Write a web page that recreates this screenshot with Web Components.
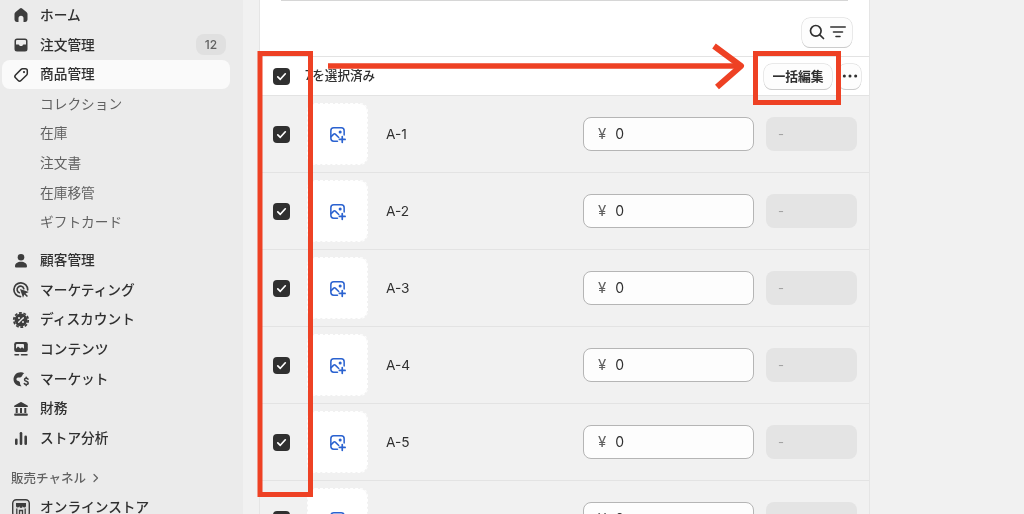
<!DOCTYPE html>
<html lang="ja">
<head>
<meta charset="utf-8">
<title>商品管理</title>
<style>
    html, body { margin: 0; height: 514px; overflow: hidden; background: #f1f1f1; }
    body {
        font-family: "Inter", "Noto Sans CJK JP", sans-serif;
        font-size: 13.7px;
        color: #303030;
        filter: blur(.35px); /* the reference is a soft, scaled-up capture */
    }
</style>
</head>
<body>
<app-shell>
    <side-nav slot="nav">
        <nav-item icon="home">ホーム</nav-item>
        <nav-item icon="inbox" badge="12">注文管理</nav-item>
        <nav-item icon="tag" active>商品管理</nav-item>
        <nav-item sub>コレクション</nav-item>
        <nav-item sub>在庫</nav-item>
        <nav-item sub>注文書</nav-item>
        <nav-item sub>在庫移管</nav-item>
        <nav-item sub>ギフトカード</nav-item>
        <nav-item icon="person" class="group">顧客管理</nav-item>
        <nav-item icon="target">マーケティング</nav-item>
        <nav-item icon="discount">ディスカウント</nav-item>
        <nav-item icon="content">コンテンツ</nav-item>
        <nav-item icon="globe">マーケット</nav-item>
        <nav-item icon="bank">財務</nav-item>
        <nav-item icon="bars">ストア分析</nav-item>
        <nav-heading>販売チャネル</nav-heading>
        <nav-item icon="store">オンラインストア</nav-item>
    </side-nav>
    <variant-card>
        <variant-row>A-1</variant-row>
        <variant-row>A-2</variant-row>
        <variant-row>A-3</variant-row>
        <variant-row>A-4</variant-row>
        <variant-row>A-5</variant-row>
        <variant-row>A-6</variant-row>
    </variant-card>
</app-shell>
<red-notes></red-notes>

<script>
const ICONS = {
    home: `<path fill="currentColor" d="M8.900 3.500a1.800 1.800 0 0 1 2.200 0l4.300 3.400c.7.500 1.100 1.300 1.100 2.200v5.500a2.300 2.300 0 0 1-2.300 2.400h-1.700v-3.700a2.500 2.500 0 0 0-5 0V17H5.800a2.300 2.300 0 0 1-2.300-2.400V9.100c0-.9.400-1.700 1.100-2.200z"/>`,
    inbox: `<path fill="currentColor" fill-rule="evenodd" d="M6 3.500h8A2.500 2.500 0 0 1 16.500 6v8a2.500 2.500 0 0 1-2.500 2.500H6A2.500 2.500 0 0 1 3.500 14V6A2.500 2.500 0 0 1 6 3.500zM6 5a1 1 0 0 0-1 1v3.500h2.400c.5 0 .8.300 1 .7l.3.8h2.600l.3-.8c.2-.4.500-.7 1-.7H15V6a1 1 0 0 0-1-1z"/>`,
    tag: `<path fill="none" stroke="currentColor" stroke-width="1.500" stroke-linejoin="round" d="M11.500 3.800h2.800a2 2 0 0 1 2 2v2.800a2 2 0 0 1-.6 1.400l-5.700 5.500a2 2 0 0 1-2.800 0l-2.700-2.700a2 2 0 0 1 0-2.800l5.600-5.600a2 2 0 0 1 1.400-.6z"/><circle cx="13" cy="7.100" r="1.100" fill="currentColor"/>`,
    person: `<circle cx="10" cy="6.300" r="3.300" fill="currentColor"/><path fill="currentColor" d="M4 15.200c0-2.800 2.700-4.400 6-4.400s6 1.600 6 4.400c0 .7-.5 1.300-1.200 1.300H5.200c-.7 0-1.200-.6-1.200-1.300z"/>`,
    target: `<path fill="none" stroke="currentColor" stroke-width="1.700" stroke-linecap="round" d="M9.500 16.600A6.900 6.900 0 1 1 16.700 9.800"/><path fill="none" stroke="currentColor" stroke-width="1.600" stroke-linecap="round" d="M8.400 12.800a3.400 3.400 0 1 1 4.400-4"/><path fill="currentColor" d="M9 9l8.800 3.100-3.300 1.400 2.500 2.500-1.100 1.100-2.500-2.500L12 17.800z"/>`,
    discount: `<circle cx="10" cy="10" r="6.400" fill="currentColor"/><circle cx="10" cy="10" r="7.200" fill="none" stroke="currentColor" stroke-width="1.800" stroke-dasharray="2.800 1.725"/><path stroke="#ebebeb" stroke-width="1.400" stroke-linecap="round" d="M12.300 7.700l-4.600 4.600"/><circle cx="8" cy="8" r="1" fill="#ebebeb"/><circle cx="12" cy="12" r="1" fill="#ebebeb"/>`,
    content: `<rect x="3.200" y="3" width="13.600" height="10" rx="2.200" fill="currentColor"/><path fill="#ebebeb" d="M5 9.800l2-2.200 2.400 2 1.600-1.300 2 1.500v-3.800a1 1 0 0 0-1-1H6a1 1 0 0 0-1 1z"/><path stroke="currentColor" stroke-width="1.500" stroke-linecap="round" d="M4 15.800h3.500M10.500 15.800H16"/>`,
    globe: `<path fill="currentColor" d="M13.200 4.300A7 7 0 1 0 10.500 17.200c-1-.9-1.500-2-1.500-3.200 0-1.500-1.300-1.700-2.500-2.200C5.400 11.300 5 9.800 6 9c1.200-.9 2.700-.3 3.800-.8 1-.5 1.300-1.500 1.700-2.300.3-.6 1-1.100 1.700-1.600z"/><path fill="none" stroke="currentColor" stroke-width="1.500" stroke-linecap="round" d="M17 10.200c-.4-.6-1-.9-1.800-.9-1 0-1.700.6-1.700 1.400 0 2 3.700 1.200 3.700 3.300 0 .9-.8 1.500-1.900 1.500-.9 0-1.600-.4-2-1M15.200 8.200v1M15.200 15.500v1"/>`,
    bank: `<path fill="currentColor" d="M9.300 3.200a1.500 1.500 0 0 1 1.400 0l5.800 3.200c.7.400.4 1.600-.4 1.600H3.900c-.8 0-1.100-1.200-.4-1.600z"/><rect x="4.700" y="9" width="2" height="5" fill="currentColor"/><rect x="9" y="9" width="2" height="5" fill="currentColor"/><rect x="13.300" y="9" width="2" height="5" fill="currentColor"/><rect x="3.200" y="14.500" width="13.600" height="2.300" rx=".8" fill="currentColor"/>`,
    bars: `<rect x="4" y="10.500" width="2.600" height="6.500" rx="1.300" fill="currentColor"/><rect x="8.700" y="4" width="2.600" height="13" rx="1.300" fill="currentColor"/><rect x="13.400" y="7.500" width="2.600" height="9.500" rx="1.300" fill="currentColor"/>`,
    store: `<rect x="1.700" y="1.700" width="16.600" height="16.600" rx="3.600" fill="#e0e0e0" stroke="currentColor" stroke-width="1.400"/><path fill="currentColor" d="M5 5h10v3.300a1.700 1.700 0 0 1-3.300 0 1.700 1.700 0 0 1-3.400 0 1.700 1.700 0 0 1-3.300 0z"/><path fill="none" stroke="currentColor" stroke-width="1.300" d="M5.800 10.500V16M14.200 10.500V16M8.500 16v-3.500h3V16"/>`,
    search: `<circle cx="8.800" cy="8.800" r="5.300" fill="none" stroke="currentColor" stroke-width="1.700"/><path stroke="currentColor" stroke-width="1.700" stroke-linecap="round" d="M12.800 12.800l3.700 3.700"/>`,
    filter: `<path stroke="currentColor" stroke-width="1.600" stroke-linecap="round" d="M2.800 5h14.400M5.500 10h9M8 14.500h4"/>`,
    dots: `<circle cx="3.700" cy="10" r="1.700" fill="currentColor"/><circle cx="10" cy="10" r="1.700" fill="currentColor"/><circle cx="16.300" cy="10" r="1.700" fill="currentColor"/>`,
    imageadd: `<path fill="none" stroke="currentColor" stroke-width="1.600" stroke-linecap="round" stroke-linejoin="round" d="M10 17H6a3 3 0 0 1-3-3V6a3 3 0 0 1 3-3h8a3 3 0 0 1 3 3v4.500"/><path fill="none" stroke="currentColor" stroke-width="1.600" stroke-linecap="round" stroke-linejoin="round" d="M3.300 12.200l2.700-2.600c.5-.5 1.200-.5 1.700 0l3.600 3.500"/><circle cx="12.800" cy="7.300" r="1.600" fill="currentColor"/><path stroke="currentColor" stroke-width="1.800" stroke-linecap="round" d="M15 12.200v6M12 15.200h6"/>`
};

const svgIcon = (name, size = 20) =>
    `<svg width="${size}" height="${size}" viewBox="0 0 20 20" aria-hidden="true">${ICONS[name] || ''}</svg>`;

class AppShell extends HTMLElement {
    constructor(){
        super();
        this.attachShadow({mode:'open'})
        this.shadowRoot.innerHTML = `
        <style>
            :host { display: grid; grid-template-columns: 243px 627px; height: 514px; overflow: hidden; }
            #main { padding-left: 16px; min-width: 0; }
        </style>
        <slot name="nav"></slot>
        <div id="main"><slot></slot></div>
        `;
    }
}

class SideNav extends HTMLElement {
    constructor(){
        super();
        this.attachShadow({mode:'open'})
        this.shadowRoot.innerHTML = `
        <style>
            :host { display: flex; flex-direction: column; background: #ebebeb; height: 514px; padding-top: .6px; overflow: hidden; box-sizing: border-box; }
            ::slotted(.group) { margin-top: 8.400px; }
        </style>
        <slot></slot>
        `;
    }
}

class NavItem extends HTMLElement {
    constructor(){
        super();
        this.attachShadow({mode:'open'})
    }

    connectedCallback() {
        const sub = this.hasAttribute('sub');
        const icon = this.getAttribute('icon');
        const badge = this.getAttribute('badge');
        this.shadowRoot.innerHTML = `
        <style>
            :host {
                display: flex;
                align-items: center;
                flex: none;
                height: 29.600px;
                width: 228px;
                margin-left: 2px;
                box-sizing: border-box;
                border-radius: 8px;
                color: #303030;
                font-weight: 500;
                white-space: nowrap;
            }
            :host([active]) { background: #fafafa; }
            :host([sub]) { color: #616161; font-weight: 400; }
            #icon { width: 20px; height: 20px; margin-left: 9px; margin-right: 9px; display: flex; color: #3d3d3d; }
            :host([active]) #icon { color: #303030; }
            #label { flex: 1; padding-bottom: 2.600px; }
            #badge {
                width: 30px; height: 21px; margin-right: 4px;
                border-radius: 8px; background: #e0e0e0; color: #616161;
                display: flex; align-items: center; justify-content: center;
                font-size: 12px;
            }
        </style>
        ${sub ? '<span id="icon"></span>' : `<span id="icon">${svgIcon(icon)}</span>`}
        <span id="label"><slot></slot></span>
        ${badge ? `<span id="badge">${badge}</span>` : ''}
        `;
    }
}

class NavHeading extends HTMLElement {
    constructor(){
        super();
        this.attachShadow({mode:'open'})
        this.shadowRoot.innerHTML = `
        <style>
            :host {
                display: flex; align-items: center; gap: 7px; flex: none;
                height: 30px; margin-top: 10px; padding-left: 11px;
                font-size: 12.500px; color: #616161; font-weight: 500;
            }
            svg { display: block; }
        </style>
        <slot></slot>
        <svg width="6" height="10" viewBox="0 0 6 10"><path d="M1 1.500L4.500 5 1 8.500" fill="none" stroke="#616161" stroke-width="1.200" stroke-linecap="round" stroke-linejoin="round"/></svg>
        `;
    }
}

class CheckBox extends HTMLElement {
    constructor(){
        super();
        this.attachShadow({mode:'open'})
        this.shadowRoot.innerHTML = `
        <style>
            :host {
                display: flex; flex: none; width: 17px; height: 17px;
                border-radius: 4px; background: #303030;
                align-items: center; justify-content: center;
            }
        </style>
        <svg width="11" height="11" viewBox="0 0 11 11"><path d="M1.800 5.800l2.500 2.500 5-5.500" fill="none" stroke="#fff" stroke-width="1.700" stroke-linecap="round" stroke-linejoin="round"/></svg>
        `;
    }
}

class PlainButton extends HTMLElement {
    constructor(){
        super();
        this.attachShadow({mode:'open'})
        this.shadowRoot.innerHTML = `
        <style>
            :host {
                display: inline-flex; align-items: center; justify-content: center; flex: none;
                box-sizing: border-box; height: 25px; border-radius: 8px;
                background: #fdfdfd; color: #303030;
                font-size: 12.800px; font-weight: 600;
                box-shadow: 0 0 0 .5px #d4d4d4, 0 1px 0 #c4c4c4;
            }
            svg { display: block; }
            #inner { display: flex; align-items: center; margin-top: -1px; }
        </style>
        <span id="inner"><slot></slot></span>
        `;
    }
}

class VariantCard extends HTMLElement {
    constructor(){
        super();
        this.attachShadow({mode:'open'})
        this.shadowRoot.innerHTML = `
        <style>
            :host {
                display: block; box-sizing: border-box; height: 514px; overflow: hidden;
                background: #fff;
                border-left: 1px solid #e5e5e5;
                border-right: 1px solid #e5e5e5;
            }
            #search { height: 1px; margin: 0 21px; background: #d6d6d6; }
            #tools { display: flex; justify-content: flex-end; align-items: flex-start; height: 55px; padding: 17px 17px 0 0; box-sizing: border-box; }
            #find { width: 50px; height: 29px; }
            #bar {
                display: flex; align-items: center; height: 40px; box-sizing: border-box;
                padding: 0 8px 0 13px;
                border-top: 1px solid #e3e3e3; border-bottom: 1px solid #e3e3e3;
            }
            #count { margin-left: 15px; flex: 1; font-size: 12.600px; font-weight: 500; padding-bottom: 4px; }
            #bulk { width: 68px; margin-right: 6px; }
            #more { width: 23px; }
        </style>
        <div id="search"></div>
        <div id="tools">
            <plain-button id="find">${svgIcon('search', 20)}<span style="width:1px"></span>${svgIcon('filter', 20)}</plain-button>
        </div>
        <div id="bar">
            <check-box></check-box>
            <span id="count">7を選択済み</span>
            <plain-button id="bulk">一括編集</plain-button>
            <plain-button id="more">${svgIcon('dots', 18)}</plain-button>
        </div>
        <slot></slot>
        `;
    }
}

class VariantRow extends HTMLElement {
    constructor(){
        super();
        this.attachShadow({mode:'open'})
        this.shadowRoot.innerHTML = `
        <style>
            :host {
                display: flex; align-items: center; box-sizing: border-box;
                height: 77px; padding: 0 12px 0 13px;
                background: #f1f1f1; border-bottom: 1px solid #e3e3e3;
            }
            #thumb {
                width: 61px; height: 62px; margin-left: 17px; margin-right: 18px; flex: none;
                box-sizing: border-box; background: #fff; background-clip: padding-box; border-radius: 8px;
                border: 1.500px dashed #fff;
                display: flex; align-items: center; justify-content: center;
                color: #2a62d0;
            }
            #name { flex: 1; font-size: 13.700px; }
            #price {
                width: 171px; height: 34px; box-sizing: border-box; flex: none;
                background: #fdfdfd; border: 1px solid #b5b5b5; border-radius: 8px;
                display: flex; align-items: center; padding: 0 0 2px 14px; gap: 9px;
                font-size: 14px;
            }
            #yen { color: #616161; font-size: 15px; }
            #off {
                width: 91px; height: 34px; margin-left: 12px; flex: none; box-sizing: border-box;
                background: #e4e4e4; border-radius: 8px; color: #a3a3a3;
                display: flex; align-items: center; padding-left: 12px; font-size: 13px;
            }
        </style>
        <check-box></check-box>
        <div id="thumb">${svgIcon('imageadd', 19)}</div>
        <div id="name"><slot></slot></div>
        <div id="price"><span id="yen">¥</span><span>0</span></div>
        <div id="off">-</div>
        `;
    }
}

// the red marks drawn over the screenshot
class RedNotes extends HTMLElement {
    constructor(){
        super();
        this.attachShadow({mode:'open'})
        this.shadowRoot.innerHTML = `
        <style>
            :host { position: fixed; left: 0; top: 0; width: 1024px; height: 514px; pointer-events: none; }
            svg { display: block; }
        </style>
        <svg width="1024" height="514" viewBox="0 0 1024 514" fill="none" stroke="#ee4124">
            <rect x="260" y="53.500" width="50.500" height="441" stroke-width="5"/>
            <rect x="755.500" y="53.500" width="83" height="49" stroke-width="5"/>
            <path d="M328 66H741" stroke-width="5.500"/>
            <path d="M714 46L741 66L717 87" stroke-width="6" stroke-linejoin="round"/>
        </svg>
        `;
    }
}

customElements.define('app-shell', AppShell);
customElements.define('side-nav', SideNav);
customElements.define('nav-item', NavItem);
customElements.define('nav-heading', NavHeading);
customElements.define('check-box', CheckBox);
customElements.define('plain-button', PlainButton);
customElements.define('variant-card', VariantCard);
customElements.define('variant-row', VariantRow);
customElements.define('red-notes', RedNotes);
</script>
</body>
</html>
